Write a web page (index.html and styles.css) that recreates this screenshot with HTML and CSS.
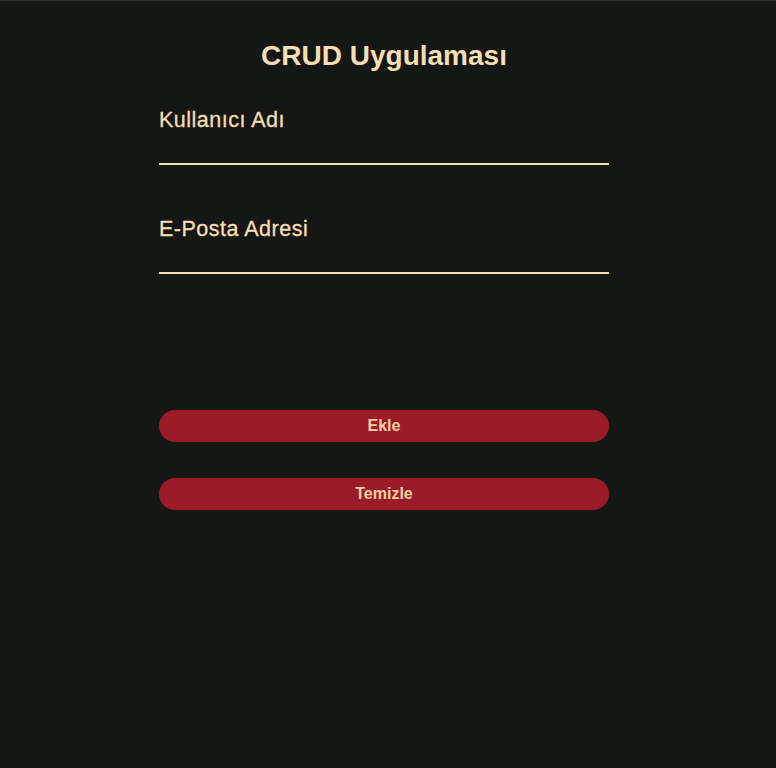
FILE: index.html
```html
<!DOCTYPE html>
<html lang="tr">
	<head>
		<meta http-equiv="Content-Type" content="text/html; charset=utf-8" />
		<title>CRUD Uygulaması</title>
		<link rel="stylesheet" href="styles.css">
	</head>

	<body>
		<div id="app">
			<h1 class="title">CRUD Uygulaması</h1>

			<!-- Form -->
			<form class="form">
				<div class="field">
					<label for="username">Kullanıcı Adı</label>
					<input type="text" id="username">
				</div>
				<div class="field">
					<label for="email">E-Posta Adresi</label>
					<input type="email" id="email">
				</div>

				<div class="actions">
					<button type="button" class="btn">Ekle</button>
					<button type="button" class="btn">Temizle</button>
				</div>
			</form>
		</div>
	</body>
</html>
```

FILE: styles.css
```css
body {
	background-color: #151715;
	border-top: 1px solid #353735;
	color: #f5deb3;
	font-family: "Liberation Sans", Arial, sans-serif;
	margin: 0;
	min-height: 767px;
	padding-right: 8px;
}
#app {
	margin: 0 auto;
	padding-top: 39px;
	width: 450px;
}
.title {
	font-size: 28px;
	font-weight: bold;
	line-height: 32px;
	margin: 0 0 36px;
	text-align: center;
}
.field {
	display: flex;
	flex-direction: column;
	margin-bottom: 52px;
}
.field label {
	font-size: 21.5px;
	letter-spacing: 0.5px;
	line-height: 24px;
	-webkit-text-stroke: 0.3px #f5deb3;
}
.field input {
	background: transparent;
	border: 0;
	border-bottom: 2px solid #f5deb3;
	color: #f5deb3;
	font-family: inherit;
	font-size: 18px;
	height: 29px;
	margin-top: 2px;
	outline: none;
	padding: 0;
}
.actions {
	display: flex;
	flex-direction: column;
	gap: 36px;
	padding-top: 84px;
}
.btn {
	background-color: #9b1c28;
	border: 0;
	border-radius: 16px;
	color: #f5d0a4;
	font-family: inherit;
	font-size: 16px;
	font-weight: bold;
	height: 32px;
	width: 100%;
}
```
